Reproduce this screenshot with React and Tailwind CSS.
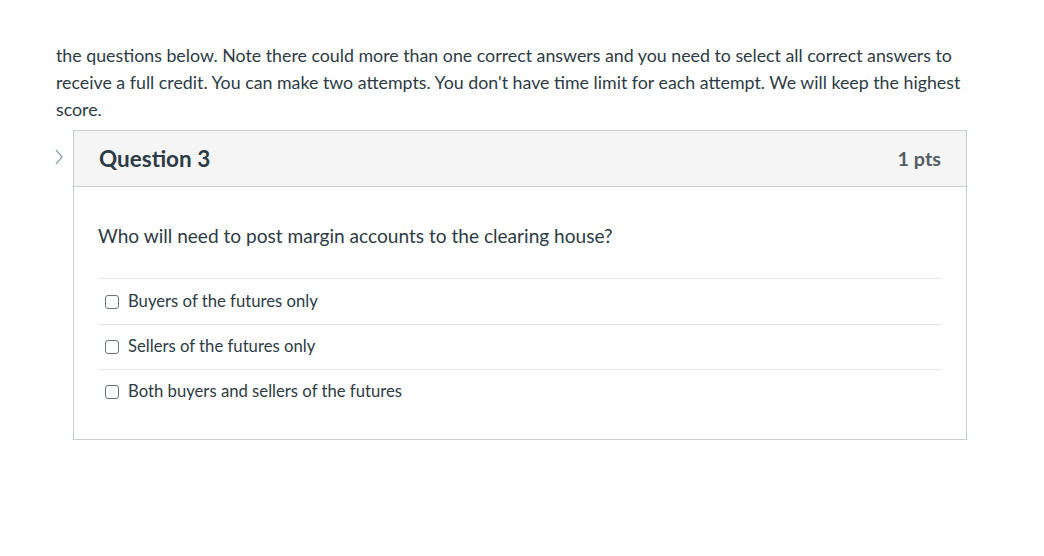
import React from 'react';

const answers = [
  'Buyers of the futures only',
  'Sellers of the futures only',
  'Both buyers and sellers of the futures',
];

export default function App() {
  return (
    <div className="min-h-[556px] w-[1044px] bg-white text-[#2d3b45]" style={{ fontFamily: 'Lato, "Open Sans", sans-serif' }}>
      <div className="pt-[42px] pl-[56px] pr-[60px]">
        <p className="text-[17.8px] leading-[27px]">
          the questions below. Note there could more than one correct answers and you need to select all correct answers to
          receive a full credit. You can make two attempts. You don't have time limit for each attempt. We will keep the highest
          score.
        </p>
      </div>

      <div className="mt-[7px] flex items-start">
        <div className="w-[73px] pt-[17px] pl-[54px]">
          <svg width="10" height="20" viewBox="0 0 10 20" fill="none">
            <path d="M2 3 L8 10 L2 17" stroke="#8aa0b4" strokeWidth="1.3" />
          </svg>
        </div>
        <div className="w-[894px] border border-[#c7cdd1]">
          <div className="flex h-[56px] items-center justify-between border-b border-[#c7cdd1] bg-[#f5f5f5] pl-[25px] pr-[25px]">
            <h2 className="text-[22.5px] font-bold">Question 3</h2>
            <span className="text-[19.8px] font-bold text-[#555d63]">1 pts</span>
          </div>
          <div className="px-[24px] pt-[37px] pb-[25px]">
            <p className="text-[19.1px] leading-[24px]">Who will need to post margin accounts to the clearing house?</p>
            <div className="mt-[30px]">
              {answers.map((a, i) => (
                <div
                  key={a}
                  className={`flex items-center gap-[9px] border-t border-[#e2e5e8] pl-[7px] ${i === 0 ? 'h-[46px]' : 'h-[45px]'}`}
                >
                  <span className="h-[14px] w-[14px] rounded-[3px] border-[1.5px] border-[#6d7479] bg-white"></span>
                  <span className="text-[16.7px]">{a}</span>
                </div>
              ))}
            </div>
          </div>
        </div>
      </div>
    </div>
  );
}
